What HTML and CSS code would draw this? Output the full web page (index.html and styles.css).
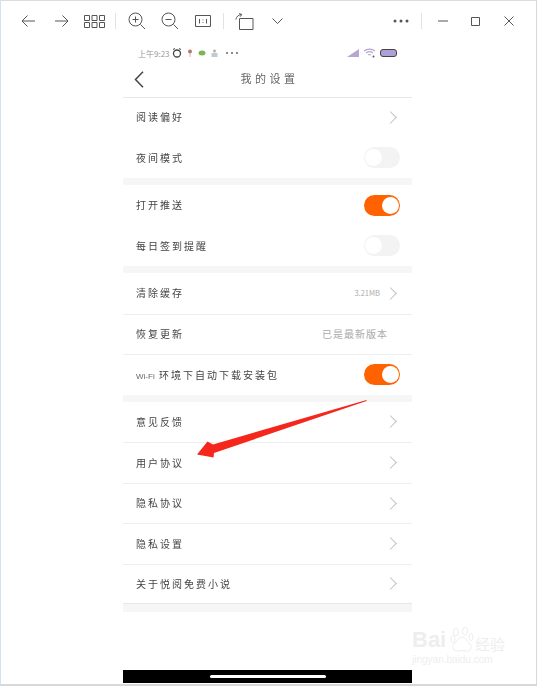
FILE: index.html
```html
<!DOCTYPE html>
<html>
<head>
    <title>我的设置</title>
    <link rel="stylesheet" href="styles.css">
</head>
<body>
    <div class="window">
        <!-- Viewer toolbar -->
        <div class="toolbar">
            <div class="tool"><svg width="15" height="12" viewBox="0 0 15 12"><path d="M14 6H1M6.500.5L1 6l5.500 5.500"/></svg></div>
            <div class="tool"><svg width="15" height="12" viewBox="0 0 15 12"><path d="M1 6h13M8.500.5L14 6l-5.500 5.500"/></svg></div>
            <div class="tool"><svg width="21" height="13" viewBox="0 0 21 13"><path d="M.5.500h5v5h-5zM8 .5h5v5H8zM15.500.5h5v5h-5zM.5 7.500h5v5h-5zM8 7.500h5v5H8zM15.500 7.500h5v5h-5z"/></svg></div>
            <div class="sep"></div>
            <div class="tool"><svg width="18" height="18" viewBox="0 0 18 18"><circle cx="7.500" cy="7.500" r="6.500"/><path d="M12.500 12.500L17 17M4.500 7.500h6M7.500 4.500v6"/></svg></div>
            <div class="tool"><svg width="18" height="18" viewBox="0 0 18 18"><circle cx="7.500" cy="7.500" r="6.500"/><path d="M12.500 12.500L17 17M4.500 7.500h6"/></svg></div>
            <div class="tool"><svg width="16" height="12" viewBox="0 0 16 12"><path d="M.5.500h15v11H.5zM4.500 4v4.500M11.500 4v4.500M8 4.500v.8M8 7v.8"/></svg></div>
            <div class="sep"></div>
            <div class="tool"><svg width="19" height="17" viewBox="0 0 19 17"><path d="M4.500 5.500h13.500v11H4.500zM.8 6.500C1.500 3.500 3.500 1.800 6.500 1.500M4.200.5l2.500 1-1.500 2.200"/></svg></div>
            <div class="tool"><svg width="11" height="6" viewBox="0 0 11 6"><path d="M.5.500l5 5 5-5"/></svg></div>
            <div class="spacer"></div>
            <div class="tool"><svg width="16" height="4" viewBox="0 0 16 4"><circle class="dot" cx="2" cy="2" r="1.500"/><circle class="dot" cx="8" cy="2" r="1.500"/><circle class="dot" cx="14" cy="2" r="1.500"/></svg></div>
            <div class="sep"></div>
            <div class="tool"><svg width="10" height="2" viewBox="0 0 10 2"><path d="M0 1h10"/></svg></div>
            <div class="tool"><svg width="9" height="9" viewBox="0 0 9 9"><path d="M.5.500h8v8h-8z"/></svg></div>
            <div class="tool"><svg width="10" height="10" viewBox="0 0 10 10"><path d="M.5.500l9 9M9.500.5l-9 9"/></svg></div>
        </div>

        <!-- Phone screenshot -->
        <div class="phone">
            <div class="status">
                <span class="clock">上午9:23</span>
                <svg class="st-icon" width="10" height="10" viewBox="0 0 10 10"><circle cx="5" cy="5.500" r="3.500" fill="none" stroke="#444" stroke-width="1.300"/><path d="M1 1.500l2-1M9 1.500l-2-1" stroke="#444"/></svg>
                <svg class="st-icon" width="6" height="8" viewBox="0 0 6 8"><circle cx="3" cy="2.500" r="2" fill="#b9776c"/><path d="M3 4v4" stroke="#bbb"/></svg>
                <svg class="st-icon" width="8" height="6" viewBox="0 0 8 6"><ellipse cx="4" cy="3" rx="3.500" ry="2.500" fill="#7cb45c"/></svg>
                <svg class="st-icon" width="7" height="8" viewBox="0 0 7 8"><circle cx="3.500" cy="2" r="1.500" fill="#c8a9a0"/><path d="M.5 4h6v4h-6z" fill="#bccbd8"/></svg>
                <span class="st-dots">
                    <i></i><i></i><i></i>
                </span>
                <span class="spacer"></span>
                <svg class="st-right" width="12" height="8" viewBox="0 0 12 8"><path d="M0 8L12 0v8z" fill="#b7a6cf"/></svg>
                <svg class="st-right" width="13" height="10" viewBox="0 0 13 10"><path d="M1 3c3-2.500 8-2.500 11 0M3 5c2-1.500 5-1.500 7 0M5 7c1-.7 2-.7 3 0" fill="none" stroke="#b7a6cf" stroke-width="1.100"/><circle cx="10.500" cy="8.500" r="1" fill="#555"/></svg>
                <span class="battery"></span>
            </div>
            <div class="nav">
                <svg class="nav-back" width="10" height="17" viewBox="0 0 10 17"><path d="M9 .8L1.500 8.500 9 16.200"/></svg>
                <span class="nav-title">我的设置</span>
            </div>

            <div class="group">
                <div class="row"><span class="label">阅读偏好</span><span class="chev"></span></div>
                <div class="row"><span class="label">夜间模式</span><span class="toggle"></span></div>
            </div>
            <div class="group">
                <div class="row"><span class="label">打开推送</span><span class="toggle on"></span></div>
                <div class="row"><span class="label">每日签到提醒</span><span class="toggle"></span></div>
            </div>
            <div class="group lined">
                <div class="row"><span class="label">清除缓存</span><span class="value size">3.21MB</span><span class="chev"></span></div>
                <div class="row"><span class="label">恢复更新</span><span class="value latest">已是最新版本</span></div>
                <div class="row"><span class="label"><span class="latin">Wi-Fi</span> 环境下自动下载安装包</span><span class="toggle on"></span></div>
            </div>
            <div class="group lined last">
                <div class="row"><span class="label">意见反馈</span><span class="chev"></span></div>
                <div class="row"><span class="label">用户协议</span><span class="chev"></span></div>
                <div class="row"><span class="label">隐私协议</span><span class="chev"></span></div>
                <div class="row"><span class="label">隐私设置</span><span class="chev"></span></div>
                <div class="row"><span class="label">关于悦阅免费小说</span><span class="chev"></span></div>
            </div>

            <div class="home-bar"><span class="home-pill"></span></div>
        </div>

        <!-- Red annotation arrow -->
        <svg class="arrow" width="537" height="686" viewBox="0 0 537 686"><polygon points="366.500,400 213,444.500 207.500,441.500 197,454.500 213.500,457.500 214,453 366.500,401"/></svg>

        <!-- Watermark -->
        <div class="mark">
            <div class="mark-top"><span class="mark-bai">Bai</span>
                <svg width="24" height="28" viewBox="0 0 24 28"><g fill="none" stroke="#eeeeee"><ellipse cx="6" cy="6" rx="2.500" ry="4"/><ellipse cx="15" cy="5" rx="2.500" ry="4"/><ellipse cx="21" cy="11" rx="2" ry="3.500"/><ellipse cx="3" cy="13" rx="2" ry="3.500"/><path d="M12 11c-4 0-5 5-8 7-3 3 0 8 4 7 3-.7 5-.7 8 0 4 1 7-4 4-7-3-2-4-7-8-7z"/></g></svg>
                <span class="mark-cn">经验</span></div>
            <div class="mark-url">jingyan.baidu.com</div>
        </div>
    </div>
</body>
</html>
```

FILE: styles.css
```css
* {
    box-sizing: border-box;
}

body {
    margin: 0;
    background: #fff;
    font-family: "Noto Sans CJK SC", "Liberation Sans", sans-serif;
}

.window {
    position: relative;
    width: 537px;
    height: 686px;
    display: flex;
    flex-direction: column;
    overflow: hidden;
    border-top: 1px solid #dcdcdc;
    border-left: 1px solid #cfe3f2;
    border-right: 1px solid #d8d8d8;
    border-bottom: 2px solid #d8d8d8;
}

/* Toolbar */
.toolbar {
    flex: 0 0 40px;
    display: flex;
    align-items: center;
    padding: 0 11px;
    margin-bottom: 5px;
}

.tool {
    width: 33px;
    display: flex;
    justify-content: center;
    align-items: center;
}

.tool svg path,
.tool svg circle {
    fill: none;
    stroke: #555;
    stroke-width: 1;
}

.tool svg circle.dot {
    fill: #555;
    stroke: none;
}

.sep {
    width: 1px;
    height: 16px;
    margin: 0 4px;
    background: #e2e2e2;
}

.spacer {
    flex: 1;
}

/* Phone */
.phone {
    width: 289px;
    margin-left: 122px;
    flex: 1;
    display: flex;
    flex-direction: column;
    background: #fff;
}

.status {
    height: 14px;
    display: flex;
    align-items: center;
    padding: 0 15px;
    color: #999;
    font-size: 8px;
}

.clock {
    width: 34px;
    white-space: nowrap;
}

.st-icon {
    margin-right: 5px;
}

.st-dots {
    margin-left: 3px;
    display: flex;
    gap: 3px;
}

.st-dots i {
    width: 2px;
    height: 2px;
    border-radius: 50%;
    background: #666;
}

.st-right {
    margin-right: 4px;
}

.battery {
    width: 17px;
    height: 8px;
    border: 1px solid #444;
    border-radius: 3px;
    background: #b0a0d8;
}

.nav {
    position: relative;
    height: 38px;
    margin-bottom: -1px;
    display: flex;
    align-items: center;
    justify-content: center;
    border-bottom: 1px solid #e8e8e8;
}

.nav-back {
    position: absolute;
    left: 11px;
    top: 11px;
}

.nav-back path {
    fill: none;
    stroke: #444;
    stroke-width: 1.500;
}

.nav-title {
    font-size: 11px;
    letter-spacing: 3.500px;
    color: #666;
    margin: 0 0 2px 4px;
    filter: blur(0.3px);
}

/* Setting groups */
.group {
    border-bottom: 7px solid #f6f6f6;
}

.group.last {
    border-bottom-width: 8px;
}

.row {
    height: 40.500px;
    display: flex;
    align-items: center;
    padding: 0 12px 0 13px;
}

.lined .row + .row {
    border-top: 1px solid #eeeeee;
}

.last .row:last-child {
    border-bottom: 1px solid #e8e8e8;
}

.label {
    flex: 1;
    font-size: 10px;
    letter-spacing: 2px;
    color: #444;
    white-space: nowrap;
    margin-bottom: 1px;
    filter: blur(0.3px);
}

.latin {
    font-family: "Liberation Sans", sans-serif;
    font-size: 8px;
    letter-spacing: 0;
    color: #666;
}

.value {
    color: #aaa;
    white-space: nowrap;
    margin-bottom: 1px;
}

.size {
    font-size: 7.500px;
    margin-right: 6px;
}

.latest {
    font-size: 10px;
    letter-spacing: 1px;
    margin-right: 12px;
}

.chev {
    width: 9px;
    height: 9px;
    margin-right: 5px;
    border-top: 1px solid #c2c2c2;
    border-right: 1px solid #c2c2c2;
    transform: rotate(45deg);
}

.toggle {
    position: relative;
    width: 36px;
    height: 21px;
    border-radius: 11px;
    background: #f3f3f3;
}

.toggle::after {
    content: "";
    position: absolute;
    left: 1px;
    top: 2px;
    width: 17px;
    height: 17px;
    border-radius: 50%;
    background: #fff;
}

.toggle.on {
    background: #ff6200;
}

.toggle.on::after {
    left: auto;
    right: 1px;
}

.home-bar {
    margin-top: auto;
    margin-bottom: 1px;
    height: 13px;
    background: #000;
    display: flex;
    justify-content: center;
    align-items: center;
}

.home-pill {
    width: 116px;
    height: 3px;
    border-radius: 2px;
    background: #fff;
}

/* Overlays */
.arrow {
    position: absolute;
    left: -1px;
    top: -1px;
    pointer-events: none;
}

.arrow polygon {
    fill: #f5261c;
}

.mark {
    position: absolute;
    left: 411px;
    top: 625px;
    width: 100px;
    color: #eeeeee;
}

.mark-top {
    display: flex;
    align-items: center;
    gap: 1px;
}

.mark-bai {
    width: 37px;
    font-family: "Liberation Sans", sans-serif;
    font-size: 22px;
    font-weight: bold;
}

.mark-cn {
    font-size: 15px;
    line-height: 1;
    margin-top: 6px;
}

.mark-url {
    font-family: "Liberation Sans", sans-serif;
    font-size: 10px;
    white-space: nowrap;
}
```
